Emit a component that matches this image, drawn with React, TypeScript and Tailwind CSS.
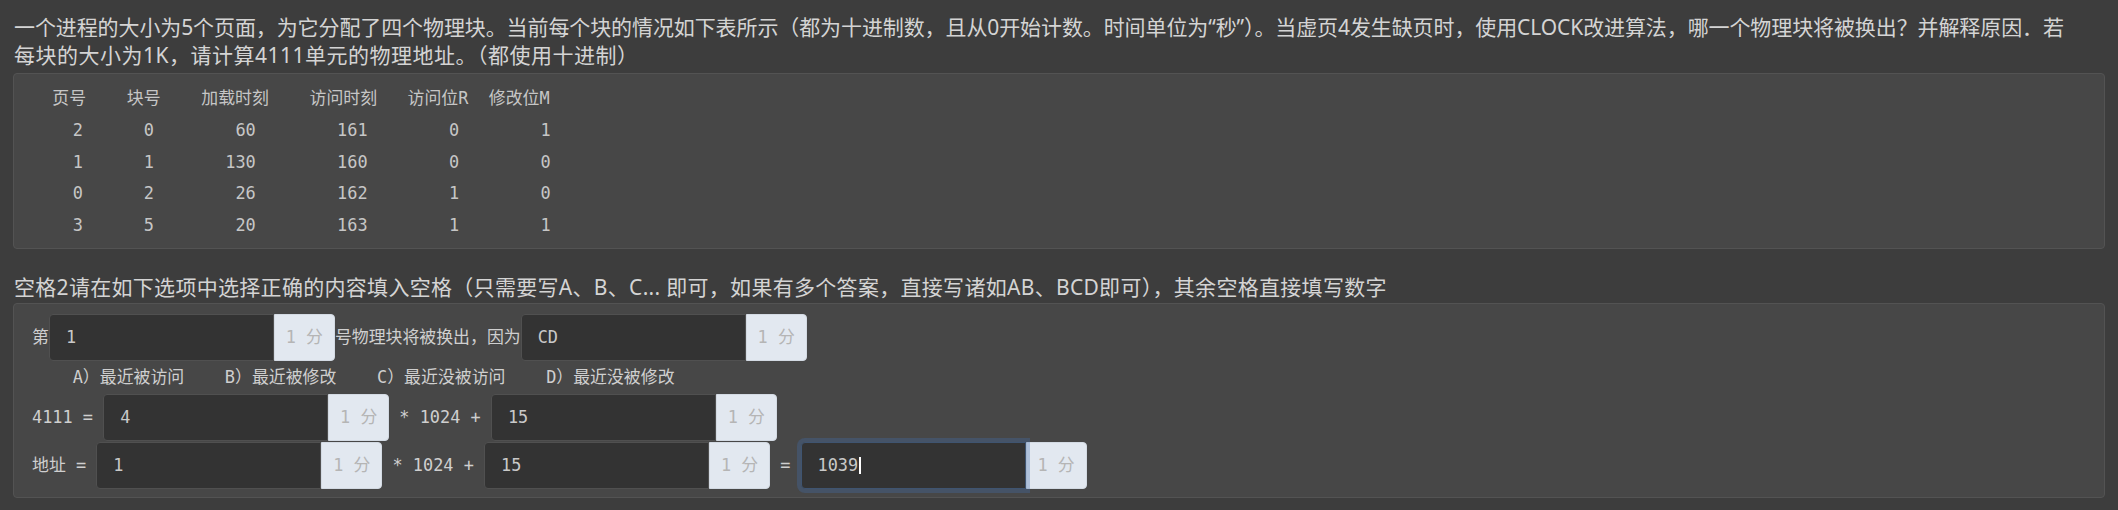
import React from "react";

const mono = "font-['DejaVu_Sans_Mono','Noto_Sans_CJK_SC',monospace]";

function row(a: string, b: string, c: string, d: string, e: string, f: string) {
  return "    " + a + b.padStart(7) + c.padStart(10) + d.padStart(11) + e.padStart(9) + f.padStart(9);
}

const tableText = [
  "  页号    块号    加载时刻    访问时刻   访问位R  修改位M",
  row("2", "0", "60", "161", "0", "1"),
  row("1", "1", "130", "160", "0", "0"),
  row("0", "2", "26", "162", "1", "0"),
  row("3", "5", "20", "163", "1", "1"),
].join("\n");

function Field({ value, focused = false }: { value: string; focused?: boolean }) {
  return (
    <div className="flex h-[47px] items-stretch">
      <div
        className={
          focused
            ? "relative z-10 flex w-[225px] items-center rounded-l-[4px] border border-[#3f5470] bg-[#333333] pl-[16px] text-[#c9c9c9] shadow-[0_0_0_4px_rgba(66,110,170,0.32)]"
            : "flex w-[225px] items-center rounded-l-[4px] border border-[#505050] bg-[#333333] pl-[16px] text-[#c9c9c9]"
        }
      >
        <span className="whitespace-pre">{value}</span>
        {focused && <span className="ml-[1px] inline-block h-[17px] w-[2px] bg-white" />}
      </div>
      <div className="flex w-[61px] items-center justify-center rounded-r-[4px] border border-[#d3dae3] bg-[#e2e8f0] text-[#b5b5b5]">
        <span className="whitespace-pre">1 分</span>
      </div>
    </div>
  );
}

export default function App() {
  return (
    <div className="min-h-[510px] w-[2118px] bg-[#3d3d3d] px-[13px] pt-[14px] pb-[12px]">
      <div className="pl-[1px] font-['Noto_Sans','Noto_Sans_CJK_SC',sans-serif] text-[21px] leading-[27.5px] text-[#d4d4d4]">
        <div className="whitespace-nowrap tracking-[-0.1px]">
          一个进程的大小为5个页面，为它分配了四个物理块。当前每个块的情况如下表所示（都为十进制数，且从0开始计数。时间单位为“秒”）。当虚页4发生缺页时，使用CLOCK改进算法，哪一个物理块将被换出？并解释原因．若
        </div>
        <div className="tracking-[0.5px]">每块的大小为1K，请计算4111单元的物理地址。（都使用十进制）</div>
      </div>

      <div className="mt-[4px] rounded-[4px] border border-[#535353] bg-[#474747] px-[18px] pt-[9px] pb-[6px]">
        <pre className={`${mono} text-[16.9px] leading-[31.75px] text-[#c6c6c6]`}>{tableText}</pre>
      </div>

      <div className="mt-[25px] pl-[1px] font-['Noto_Sans','Noto_Sans_CJK_SC',sans-serif] text-[21px] leading-[27.5px] tracking-[0.3px] text-[#d4d4d4]">
        空格2请在如下选项中选择正确的内容填入空格（只需要写A、B、C... 即可，如果有多个答案，直接写诸如AB、BCD即可），其余空格直接填写数字
      </div>

      <div className={`mt-[2px] rounded-[4px] border border-[#535353] bg-[#474747] px-[18px] pt-[9.5px] pb-[8px] ${mono} text-[16.9px] text-[#cfcfcf]`}>
        <div className="flex h-[47px] items-center">
          <span className="whitespace-pre">第</span>
          <Field value="1" />
          <span className="whitespace-pre">号物理块将被换出，因为</span>
          <Field value="CD" />
        </div>
        <div className="flex h-[33px] items-center">
          <span className="whitespace-pre">{"    A）最近被访问    B）最近被修改    C）最近没被访问    D）最近没被修改"}</span>
        </div>
        <div className="flex h-[48px] items-center">
          <span className="whitespace-pre">{"4111 = "}</span>
          <Field value="4" />
          <span className="whitespace-pre">{" * 1024 + "}</span>
          <Field value="15" />
        </div>
        <div className="flex h-[47px] items-center">
          <span className="whitespace-pre">{"地址 = "}</span>
          <Field value="1" />
          <span className="whitespace-pre">{" * 1024 + "}</span>
          <Field value="15" />
          <span className="whitespace-pre">{" = "}</span>
          <Field value="1039" focused />
        </div>
      </div>
    </div>
  );
}
